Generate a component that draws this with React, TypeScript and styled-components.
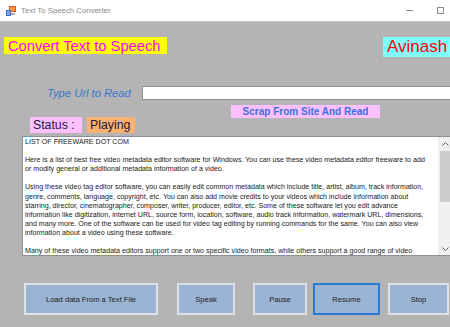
import React from 'react'
import styled, { createGlobalStyle } from 'styled-components'

const GlobalStyle = createGlobalStyle`
  html, body {
    margin: 0;
    padding: 0;
    background: #b4b4b4;
  }
  * {
    box-sizing: border-box;
  }
`

const Window = styled.div`
  width: 450px;
  height: 327px;
  overflow: hidden;
  display: flex;
  flex-direction: column;
  background: #b4b4b4;
  font-family: 'Liberation Sans', Arial, sans-serif;
`

const TitleBar = styled.header`
  height: 22px;
  flex: none;
  display: flex;
  align-items: center;
  padding-left: 6px;
  background: #ffffff;
  border-bottom: 1px solid #c6c6c6;
`

const TitleText = styled.span`
  margin-left: 5px;
  font-size: 7.8px;
  color: #8a8a8a;
`

const WindowControls = styled.div`
  margin-left: auto;
  display: flex;
  align-items: center;
  gap: 24px;
  padding-right: 6px;
`

const Minimize = styled.span`
  width: 7px;
  height: 1px;
  background: #8c8c8c;
`

const Maximize = styled.span`
  width: 7px;
  height: 7px;
  border: 1px solid #8c8c8c;
`

const Body = styled.main`
  flex: 1;
  display: flex;
  flex-direction: column;
`

const HeaderRow = styled.div`
  display: flex;
  justify-content: space-between;
  align-items: flex-start;
  margin-top: 15px;
  padding-left: 4px;
`

const Banner = styled.div<{ $bg: string; $fg: string; $size: number; $h: number; $w: number }>`
  width: ${(p) => p.$w}px;
  height: ${(p) => p.$h}px;
  display: flex;
  align-items: center;
  padding-left: 4px;
  background: ${(p) => p.$bg};
  color: ${(p) => p.$fg};
  font-size: ${(p) => p.$size}px;
  white-space: nowrap;
  flex: none;
`

const UrlRow = styled.div`
  display: flex;
  align-items: center;
  margin-top: 29px;
  padding-left: 47px;
  height: 14px;
`

const UrlLabel = styled.label`
  width: 95px;
  flex: none;
  font-size: 11.2px;
  font-style: italic;
  color: #3a76cf;
`

const UrlInput = styled.input`
  flex: none;
  width: 320px;
  height: 14px;
  border: 1px solid #8f8f8f;
  border-right: none;
  background: #ffffff;
  padding: 0 2px;
  font-size: 8px;
  outline: none;
`

const ScrapRow = styled.div`
  display: flex;
  margin-top: 5px;
  padding-left: 231px;
`

const ScrapButton = styled.button`
  width: 149px;
  height: 13px;
  padding: 0;
  border: none;
  background: #ffc0ff;
  color: #3d6fe0;
  font-family: 'Liberation Sans', Arial, sans-serif;
  font-weight: bold;
  font-size: 10px;
  line-height: 13px;
`

const StatusRow = styled.div`
  display: flex;
  gap: 5px;
  margin-top: -1px;
  padding-left: 30px;
`

const StatusTag = styled.span<{ $bg: string; $w: number }>`
  width: ${(p) => p.$w}px;
  height: 16px;
  display: flex;
  align-items: center;
  padding-left: 3px;
  background: ${(p) => p.$bg};
  color: #221a33;
  font-size: 12.3px;
`

const TextBox = styled.div`
  margin-top: 3px;
  margin-left: 22px;
  width: 430px;
  height: 120px;
  display: flex;
  background: #ffffff;
  border: 1px solid #8a8f98;
  border-right: none;
`

const TextContent = styled.div`
  flex: 1;
  min-width: 0;
  overflow: hidden;
  padding: 1px 2px;
  font-size: 7.1px;
  line-height: 9.1px;
  color: #1a1a1a;
`

const TextLine = styled.div`
  white-space: pre;
  height: 9.1px;
`

const ScrollBar = styled.div`
  width: 14px;
  flex: none;
  display: flex;
  flex-direction: column;
  align-items: center;
  background: #f0f0f0;
`

const ScrollArrow = styled.div`
  height: 13px;
  width: 100%;
  display: flex;
  align-items: center;
  justify-content: center;
`

const ScrollThumb = styled.div`
  margin-top: 1px;
  width: 10px;
  height: 51px;
  background: #cdcdcd;
`

const ScrollSpacer = styled.div`
  flex: 1;
`

const ButtonRow = styled.div`
  display: flex;
  margin-top: 27px;
`

const ActionButton = styled.button<{ $w: number; $left: number; $focused?: boolean }>`
  width: ${(p) => p.$w}px;
  margin-left: ${(p) => p.$left}px;
  height: 32px;
  flex: none;
  padding: 0;
  background: #9bb4d3;
  border: 2px solid ${(p) => (p.$focused ? '#2a7bd6' : '#dde2e8')};
  color: #1c1c1c;
  font-family: 'Liberation Sans', Arial, sans-serif;
  font-size: 7.6px;
`

const lines = [
  'LIST OF FREEWARE DOT COM',
  '',
  'Here is a list of best free video metadata editor software for Windows. You can use these video metadata editor freeware to add',
  'or modify general or additional metadata information of a video.',
  '',
  'Using these video tag editor software, you can easily edit common metadata which include title, artist, album, track information,',
  'genre, comments, language, copyright, etc. You can also add movie credits to your videos which include information about',
  'starring, director, cinematographer, composer, writer, producer, editor, etc. Some of these software let you edit advance',
  'information like digitization, internet URL, source form, location, software, audio track information, watermark URL, dimensions,',
  'and many more. One of the software can be used for video tag editing by running commands for the same. You can also view',
  'information about a video using these software.',
  '',
  'Many of these video metadata editors support one or two specific video formats, while others support a good range of video',
]

const buttons = [
  { label: 'Load data From a Text File', w: 134, left: 24 },
  { label: 'Speak', w: 58, left: 19 },
  { label: 'Pause', w: 54, left: 18 },
  { label: 'Resume', w: 67, left: 6, focused: true },
  { label: 'Stop', w: 61, left: 8 },
]

const AppIcon = () => (
  <svg width="10" height="10" viewBox="0 0 10 10">
    <rect x="3" y="0" width="7" height="6" fill="#e8572e" />
    <rect x="4" y="1" width="5" height="4" fill="#f49a3c" />
    <rect x="0" y="4" width="5" height="6" fill="#3a6fd0" />
    <rect x="1" y="5" width="3" height="4" fill="#7fa6e6" />
    <rect x="5" y="7" width="4" height="2" fill="#b0b0b0" />
  </svg>
)

const Arrow = ({ up }: { up?: boolean }) => (
  <svg width="7" height="4" viewBox="0 0 7 4">
    <path d={up ? 'M0.5 3.5 L3.5 0.5 L6.5 3.5' : 'M0.5 0.5 L3.5 3.5 L6.5 0.5'} fill="none" stroke="#606060" strokeWidth="1" />
  </svg>
)

export default function App() {
  return (
    <Window>
      <GlobalStyle />
      <TitleBar>
        <AppIcon />
        <TitleText>Text To Speech Converter</TitleText>
        <WindowControls>
          <Minimize />
          <Maximize />
        </WindowControls>
      </TitleBar>
      <Body>
        <HeaderRow>
          <Banner $bg="#ffff00" $fg="#ff00ff" $size={14.7} $h={17} $w={163}>
            Convert Text to Speech
          </Banner>
          <Banner $bg="#80ffff" $fg="#ff0000" $size={17} $h={20} $w={67}>
            Avinash
          </Banner>
        </HeaderRow>
        <UrlRow>
          <UrlLabel>Type Url to Read</UrlLabel>
          <UrlInput />
        </UrlRow>
        <ScrapRow>
          <ScrapButton>Scrap From Site And Read</ScrapButton>
        </ScrapRow>
        <StatusRow>
          <StatusTag $bg="#ffc0ff" $w={52}>Status :</StatusTag>
          <StatusTag $bg="#f9b273" $w={48}>Playing</StatusTag>
        </StatusRow>
        <TextBox>
          <TextContent>
            {lines.map((l, i) => (
              <TextLine key={i}>{l}</TextLine>
            ))}
          </TextContent>
          <ScrollBar>
            <ScrollArrow>
              <Arrow up />
            </ScrollArrow>
            <ScrollThumb />
            <ScrollSpacer />
            <ScrollArrow>
              <Arrow />
            </ScrollArrow>
          </ScrollBar>
        </TextBox>
        <ButtonRow>
          {buttons.map((b) => (
            <ActionButton key={b.label} $w={b.w} $left={b.left} $focused={b.focused}>
              {b.label}
            </ActionButton>
          ))}
        </ButtonRow>
      </Body>
    </Window>
  )
}
